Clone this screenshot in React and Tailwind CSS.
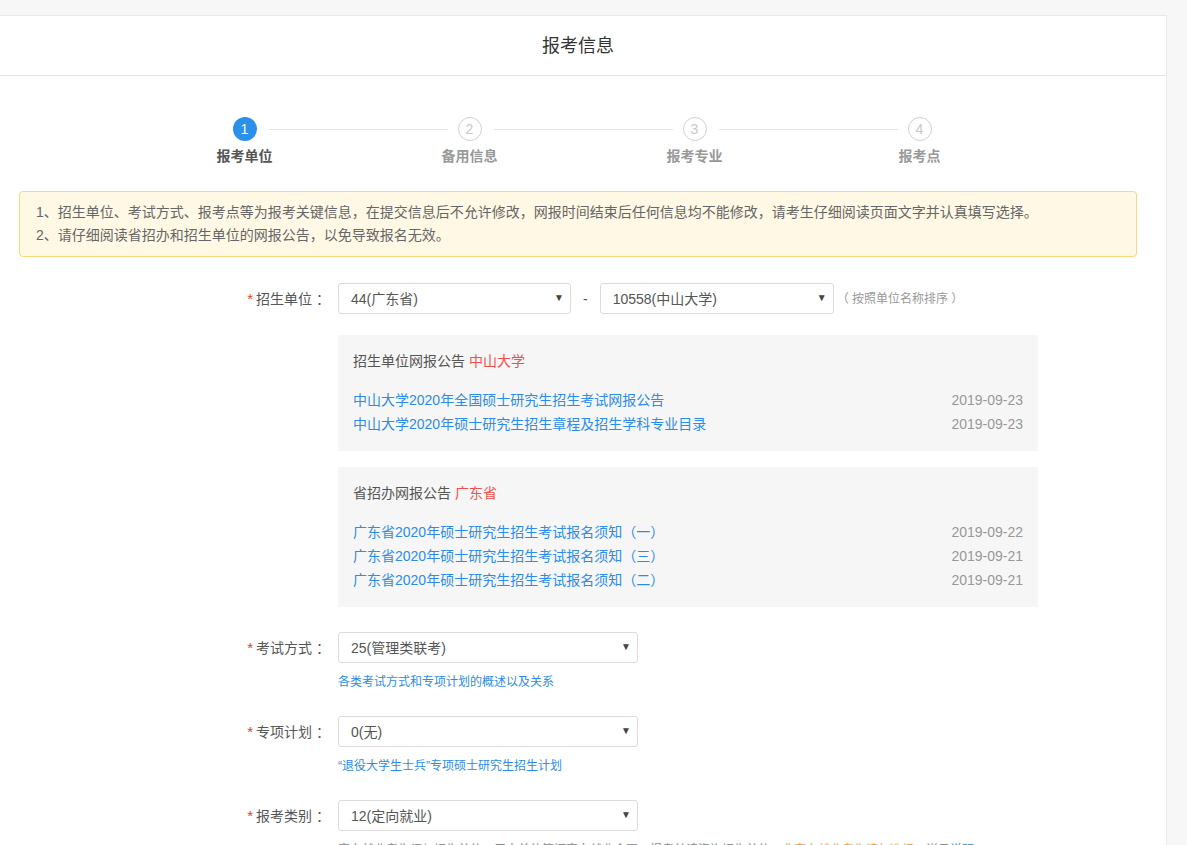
import React from 'react'

const STEPS = ['报考单位', '备用信息', '报考专业', '报考点']

const UNIT_NOTICES = [
  { title: '中山大学2020年全国硕士研究生招生考试网报公告', date: '2019-09-23' },
  { title: '中山大学2020年硕士研究生招生章程及招生学科专业目录', date: '2019-09-23' },
]

const PROV_NOTICES = [
  { title: '广东省2020年硕士研究生招生考试报名须知（一）', date: '2019-09-22' },
  { title: '广东省2020年硕士研究生招生考试报名须知（三）', date: '2019-09-21' },
  { title: '广东省2020年硕士研究生招生考试报名须知（二）', date: '2019-09-21' },
]

const FONT = { fontFamily: '"Liberation Sans", "Noto Sans CJK SC", sans-serif' }

function Select({ value, className }) {
  return (
    <div className={`flex h-[31px] items-center justify-between rounded-[3px] border border-[#dcdcdc] bg-white pl-3 pr-[6px] text-sm text-[#555] ${className}`}>
      <span>{value}</span>
      <span className="text-[10px] text-[#444]">▼</span>
    </div>
  )
}

function Label({ children }) {
  return (
    <div className="flex h-[31px] w-[319px] shrink-0 items-center justify-end pr-[12px] text-sm text-[#555]">
      <span className="mr-[3px] text-[15px] text-[#e8411c]">*</span>
      {children}
      <span className="ml-[4px] w-[10px]">：</span>
    </div>
  )
}

function NoticePanel({ title, place, items }) {
  return (
    <div className="bg-[#f6f6f6] px-[15px] pt-[16px] pb-[15px] text-sm">
      <div className="mb-[17px] leading-[20px] text-[#555]">
        {title} <span className="text-[#f0504b]">{place}</span>
      </div>
      {items.map(n => (
        <div key={n.title} className="flex justify-between leading-[24px]">
          <a className="text-[#2d8ce6]">{n.title}</a>
          <span className="text-[#999]">{n.date}</span>
        </div>
      ))}
    </div>
  )
}

export default function App() {
  return (
    <div className="h-[845px] overflow-hidden bg-[#f7f7f7] pt-[15px]" style={FONT}>
      <div className="ml-[-11px] w-[1178px] border border-[#e8e8e8] bg-white">
        {/* header */}
        <div className="flex h-[60px] items-center justify-center border-b border-[#e5e5e5] text-lg text-[#333]">
          报考信息
        </div>

        <div className="px-[29px] pt-[41px]">
          {/* steps */}
          <div className="ml-[113px] flex w-[900px]">
            {STEPS.map((s, i) => (
              <div key={s} className="relative flex w-[225px] flex-col items-center">
                <div className={`flex h-6 w-6 items-center justify-center rounded-full text-sm ${i === 0 ? 'bg-[#2a90e9] text-white' : 'border border-[#d0d0d0] bg-white text-[#c8c8c8]'}`}>
                  {i + 1}
                </div>
                {i < STEPS.length - 1 && (
                  <div className="absolute top-[12px] left-[calc(50%+24px)] h-px w-[179px] bg-[#e5e5e5]" />
                )}
                <div className={`mt-[5px] text-sm leading-[20px] font-bold ${i === 0 ? 'text-[#555]' : 'text-[#999]'}`}>{s}</div>
              </div>
            ))}
          </div>

          {/* warning */}
          <div className="mt-[25px] rounded-[4px] border border-[#fcd67f] bg-[#fff8e5] px-[16px] py-[9px] text-sm leading-[23px] text-[#666]">
            <p>1、招生单位、考试方式、报考点等为报考关键信息，在提交信息后不允许修改，网报时间结束后任何信息均不能修改，请考生仔细阅读页面文字并认真填写选择。</p>
            <p>2、请仔细阅读省招办和招生单位的网报公告，以免导致报名无效。</p>
          </div>

          {/* form */}
          <div className="mt-[26px]">
            <div className="flex">
              <Label>招生单位</Label>
              <div className="flex-1">
                <div className="flex items-center">
                  <Select value="44(广东省)" className="w-[233px]" />
                  <span className="mx-[12px] text-sm text-[#555]">-</span>
                  <Select value="10558(中山大学)" className="w-[234px]" />
                  <span className="ml-[3px] text-xs text-[#999]">（ 按照单位名称排序 ）</span>
                </div>
                <div className="mt-[21px] w-[700px]">
                  <NoticePanel title="招生单位网报公告" place="中山大学" items={UNIT_NOTICES} />
                  <div className="mt-[16px]">
                    <NoticePanel title="省招办网报公告" place="广东省" items={PROV_NOTICES} />
                  </div>
                </div>
              </div>
            </div>

            <div className="mt-[25px] flex">
              <Label>考试方式</Label>
              <div>
                <Select value="25(管理类联考)" className="w-[300px]" />
                <a className="mt-[10px] block text-xs leading-[18px] text-[#2d8ce6]">各类考试方式和专项计划的概述以及关系</a>
              </div>
            </div>

            <div className="mt-[25px] flex">
              <Label>专项计划</Label>
              <div>
                <Select value="0(无)" className="w-[300px]" />
                <a className="mt-[10px] block text-xs leading-[18px] text-[#2d8ce6]">“退役大学生士兵”专项硕士研究生招生计划</a>
              </div>
            </div>

            <div className="mt-[25px] flex">
              <Label>报考类别</Label>
              <div>
                <Select value="12(定向就业)" className="w-[300px]" />
                <p className="mt-[10px] text-xs leading-[18px] text-[#888]">
                  定向就业考生须与招生单位、用人单位签订定向就业合同，报考前请咨询招生单位，<span className="text-[#f0a030]">非定向就业考生请勿选择</span>，详见<a className="text-[#2d8ce6]">说明</a>
                </p>
              </div>
            </div>
          </div>
        </div>
      </div>
    </div>
  )
}
